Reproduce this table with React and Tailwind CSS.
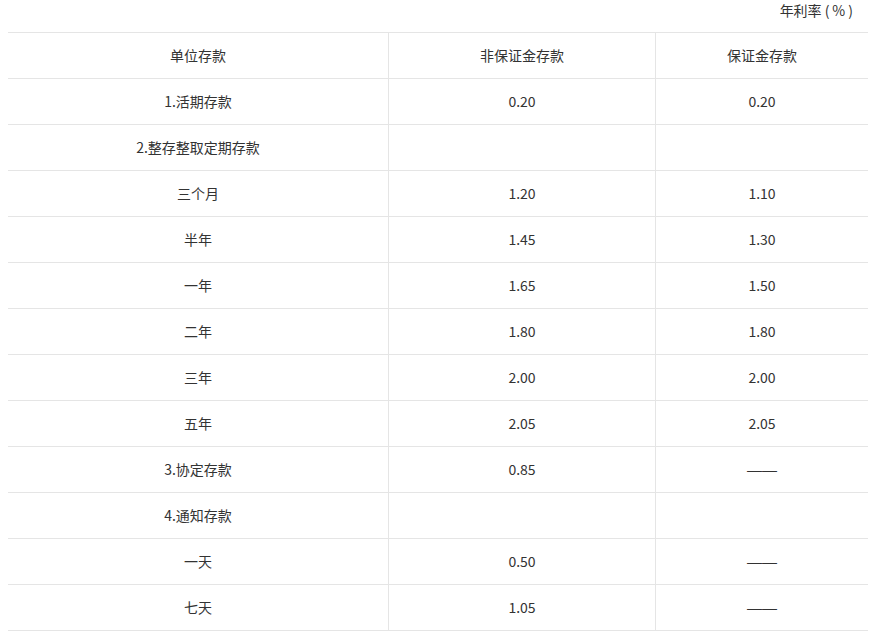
const rows = [
  ['单位存款', '非保证金存款', '保证金存款'],
  ['1.活期存款', '0.20', '0.20'],
  ['2.整存整取定期存款', '', ''],
  ['三个月', '1.20', '1.10'],
  ['半年', '1.45', '1.30'],
  ['一年', '1.65', '1.50'],
  ['二年', '1.80', '1.80'],
  ['三年', '2.00', '2.00'],
  ['五年', '2.05', '2.05'],
  ['3.协定存款', '0.85', '——'],
  ['4.通知存款', '', ''],
  ['一天', '0.50', '——'],
  ['七天', '1.05', '——'],
];

function Cell({ value, border }) {
  return (
    <div className={'flex items-center justify-center' + (border ? ' border-l border-[#e5e5e5]' : '')}>
      {value === '——' ? (
        <span className="text-[15px] leading-none" style={{ fontFamily: '"Liberation Sans", sans-serif' }}>
          ——
        </span>
      ) : (
        value
      )}
    </div>
  );
}

export default function App() {
  return (
    <div
      className="w-[872px] h-[643px] bg-white text-[#333] text-[14px]"
      style={{ fontFamily: '"Noto Sans CJK SC", "Noto Sans", sans-serif' }}
    >
      <div className="ml-[8px] w-[860px]">
        <div className="h-[32px] pr-[15px] text-right leading-[20px]">
          年利率<span className="ml-[3px]">(</span>
          <span className="mx-[3px]">%</span>)
        </div>
        <div className="border-t border-[#e5e5e5]">
          {rows.map((r, i) => (
            <div
              key={i}
              className="grid grid-cols-[380px_267px_213px] h-[46px] border-b border-[#e5e5e5]"
            >
              <Cell value={r[0]} />
              <Cell value={r[1]} border />
              <Cell value={r[2]} border />
            </div>
          ))}
        </div>
      </div>
    </div>
  );
}
